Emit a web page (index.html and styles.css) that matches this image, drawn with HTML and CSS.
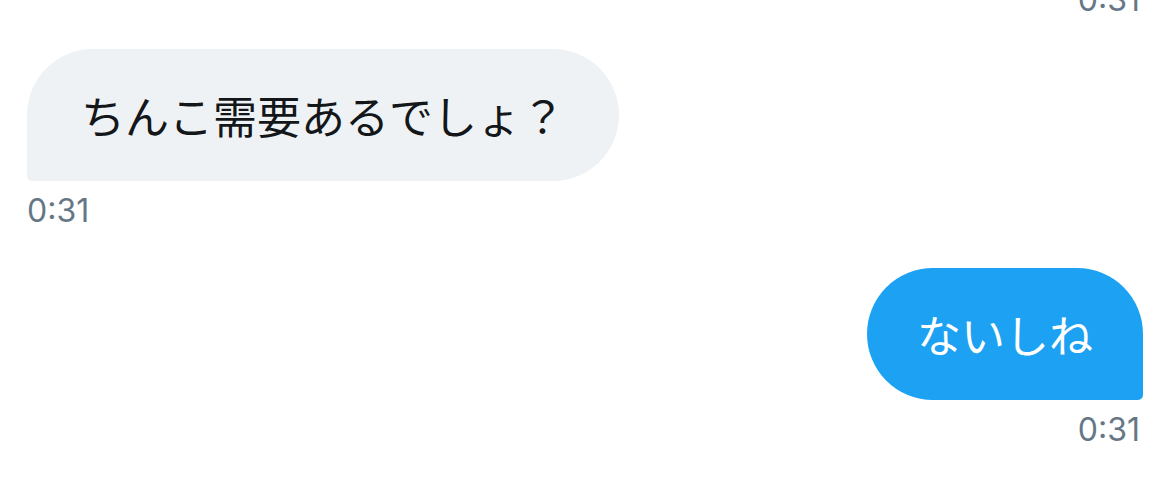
FILE: index.html
```html
<!DOCTYPE html>
<html lang="ja">
<head>
    <meta charset="UTF-8">
    <meta name="viewport" content="width=device-width, initial-scale=1.0">
    <title>Messages</title>
    <link rel="stylesheet" href="styles.css">
</head>
<body>
    <div class="thread">
        <div class="message sent partial">
            <div class="time">0:31</div>
        </div>

        <div class="message received">
            <div class="bubble">ちんこ需要あるでしょ？</div>
            <div class="time">0:31</div>
        </div>

        <div class="message sent">
            <div class="bubble">ないしね</div>
            <div class="time">0:31</div>
        </div>
    </div>
</body>
</html>
```

FILE: styles.css
```css
body {
    margin: 0;
    background-color: #fff;
    font-family: "Noto Sans CJK JP", "Noto Sans", sans-serif;
    overflow: hidden;
}

.thread {
    display: flex;
    flex-direction: column;
    padding: 0 27px;
}

.message {
    display: flex;
    flex-direction: column;
    align-items: flex-start;
    margin-bottom: 39px;
}

.message.sent {
    align-items: flex-end;
}

.message.partial {
    margin-top: -30px;
    margin-bottom: 31px;
}

.bubble {
    height: 132px;
    box-sizing: border-box;
    display: flex;
    align-items: center;
    padding: 0 54px;
    font-size: 44px;
    color: #14171a;
    background-color: #eff2f4;
    border-radius: 66px 66px 66px 5px;
}

.sent .bubble {
    padding: 0 50px;
    color: #fff;
    background-color: #1da1f2;
    border-radius: 66px 66px 5px 66px;
}

.time {
    margin-top: 12px;
    padding-right: 3px;
    font-family: Inter, "Liberation Sans", sans-serif;
    font-size: 32px;
    line-height: 36px;
    color: #657786;
}
```
